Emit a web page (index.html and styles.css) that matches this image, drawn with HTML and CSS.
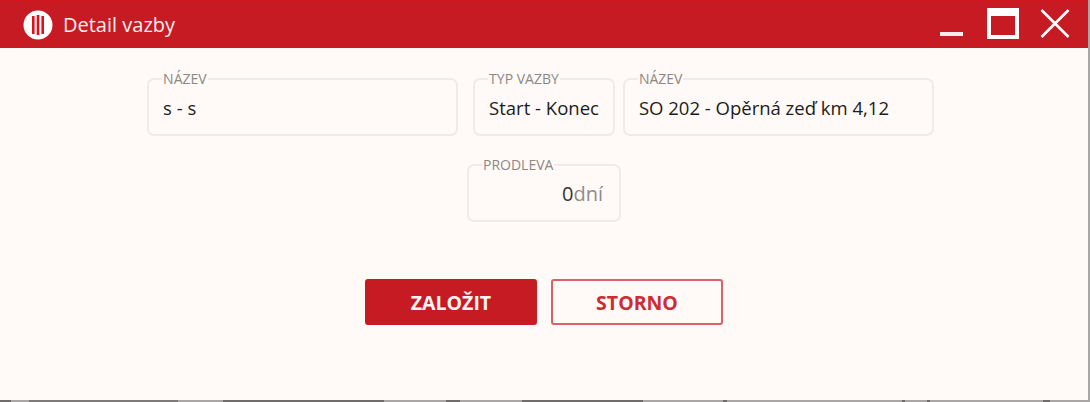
FILE: index.html
```html
<!DOCTYPE html>
<html lang="en">
<head>
  <meta charset="UTF-8">
  <meta name="viewport" content="width=device-width, initial-scale=1">
  <title>Detail vazby</title>
  <link rel="stylesheet" href="styles.css">
</head>
<body>

  <div class="dialog">
    <header class="titlebar">
      <svg class="logo" width="30" height="30" viewBox="0 0 30 30">
        <circle cx="15" cy="15" r="14.5" fill="#fff"/>
        <rect x="9" y="6" width="2.6" height="18" fill="#e3101c"/>
        <rect x="13.7" y="5" width="2.6" height="20" fill="#e3101c"/>
        <rect x="18.4" y="6" width="2.6" height="18" fill="#e3101c"/>
      </svg>
      <span class="title">Detail vazby</span>
      <div class="window-buttons">
        <svg class="win-min" width="23" height="32" viewBox="0 0 23 32"><rect y="24" width="23" height="4" fill="#fbeaea"/></svg>
        <svg class="win-max" width="32" height="32" viewBox="0 0 32 32"><rect x="2" y="2" width="28" height="27" fill="none" stroke="#fff" stroke-width="4"/><rect x="0" y="0" width="32" height="8" fill="#fff"/></svg>
        <svg width="30" height="32" viewBox="0 0 30 32"><path d="M1.5 2 L28.5 29 M28.5 2 L1.5 29" stroke="#fff" stroke-width="2.6" fill="none"/></svg>
      </div>
    </header>

    <main class="content">
      <div class="row row-top">
        <fieldset class="field field-wide">
          <legend>NÁZEV</legend>
          <div class="value">s - s</div>
        </fieldset>
        <fieldset class="field field-type">
          <legend>TYP VAZBY</legend>
          <div class="value">Start - Konec</div>
        </fieldset>
        <fieldset class="field field-wide">
          <legend>NÁZEV</legend>
          <div class="value">SO 202 - Opěrná zeď km 4,12</div>
        </fieldset>
      </div>
      <div class="row">
        <fieldset class="field field-delay">
          <legend>PRODLEVA</legend>
          <div class="value value-number">0<span class="unit">dní</span></div>
        </fieldset>
      </div>
      <div class="actions">
        <button class="btn btn-primary">ZALOŽIT</button>
        <button class="btn btn-outline">STORNO</button>
      </div>
    </main>
    <div class="under-strip"></div>
  </div>

</body>
</html>
```

FILE: styles.css
```css
* {
  margin: 0;
  padding: 0;
  box-sizing: border-box;
}
html, body {
  height: 100%;
  overflow: hidden;
}
body {
  background: #fffaf7;
  color: #1c1c1c;
  font-family: "Open Sans", Arial, sans-serif;
}
.dialog {
  height: 402px;
  display: flex;
  flex-direction: column;
  border-right: 2px solid #a9a7a5;
}
.titlebar {
  height: 48px;
  flex: none;
  display: flex;
  align-items: center;
  padding-left: 23px;
  background: #c71b23;
  border-top: 1px solid #d4141c;
  color: #fff;
}
.logo {
  flex: none;
}
.title {
  margin-left: 10px;
  font-size: 20px;
  color: #fbeeee;
}
.window-buttons {
  margin-left: auto;
  align-self: flex-start;
  display: flex;
  padding: 7px 18px 0 0;
}
.win-min {
  margin-right: 24px;
}
.win-max {
  margin-right: 21px;
}
.content {
  flex: 1;
  display: flex;
  flex-direction: column;
  align-items: center;
  padding-top: 24px;
}
.row {
  display: flex;
  justify-content: center;
  gap: 8px;
  margin-bottom: 22px;
}
.row-top {
  padding-right: 7px;
}
.field {
  height: 64px;
  border: 2px solid #f0ebe8;
  border-radius: 7px;
  padding: 0 14px;
}
.field legend {
  font-size: 14px;
  line-height: 14px;
  color: #8b8886;
  padding: 0 1px;
  margin-left: -1px;
}
.field-wide {
  width: 311px;
}
.field-wide:first-child {
  margin-right: 7px;
}
.field-type {
  width: 139px;
}
.field-delay {
  width: 154px;
}
.value {
  font-size: 18.5px;
  line-height: 24px;
  padding-top: 10px;
  white-space: nowrap;
}
.value-number {
  text-align: right;
  color: #333;
  font-size: 20px;
  padding-right: 2px;
}
.unit {
  color: #8f8c8a;
}
.actions {
  display: flex;
  justify-content: center;
  gap: 14px;
  margin-top: 35px;
}
.btn {
  width: 172px;
  height: 46px;
  border-radius: 3px;
  font-family: inherit;
  font-size: 19.5px;
  font-weight: 700;
}
.btn-primary {
  background: #c71b23;
  border: 2px solid #c71b23;
  color: #fdf3f3;
}
.btn-outline {
  background: #fffaf7;
  border: 2px solid #dc6067;
  color: #cf2b34;
}
.under-strip {
  height: 2px;
  flex: none;
  background: linear-gradient(to right,
    #6f6d6c 0 11px, #a9a7a5 11px 29px, #7d7b7a 29px 178px, #a9a7a5 178px 223px,
    #6f6d6c 223px 384px, #a9a7a5 384px 446px, #6f6d6c 446px 460px, #a9a7a5 460px 522px,
    #6f6d6c 522px 643px, #a9a7a5 643px 723px, #6f6d6c 723px 727px, #a9a7a5 727px 902px,
    #6f6d6c 902px 905px, #a9a7a5 905px 927px, #6f6d6c 927px 930px, #a9a7a5 930px 1043px,
    #6f6d6c 1043px 1050px, #a9a7a5 1050px);
}
```
